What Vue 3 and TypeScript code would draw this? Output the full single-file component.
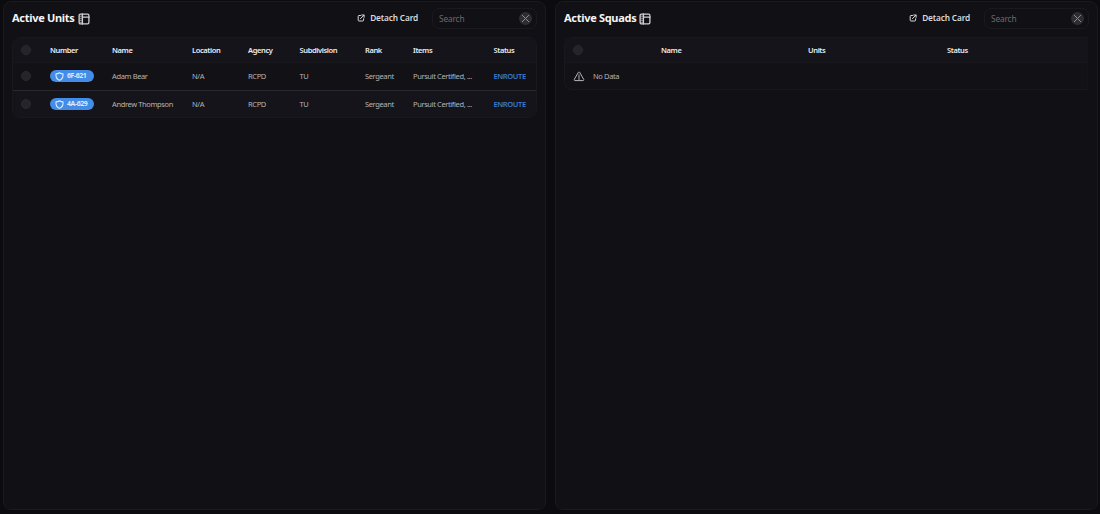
<script setup lang="ts">
interface Unit {
  number: string
  name: string
  location: string
  agency: string
  subdivision: string
  rank: string
  items: string
  status: string
}

const unitColumns: string[] = ['Number', 'Name', 'Location', 'Agency', 'Subdivision', 'Rank', 'Items', 'Status']
const squadColumns: string[] = ['Name', 'Units', 'Status']
const shared = { location: 'N/A', agency: 'RCPD', subdivision: 'TU', rank: 'Sergeant', items: 'Pursuit Certified, ...', status: 'ENROUTE' }
const units: Unit[] = [
  { number: '6F-621', name: 'Adam Bear', ...shared },
  { number: '4A-629', name: 'Andrew Thompson', ...shared },
]
const cards = [
  { id: 'units', title: 'Active Units' },
  { id: 'squads', title: 'Active Squads' },
]
</script>

<template>
  <main class="board">
    <section v-for="card in cards" :key="card.id" class="card" :class="card.id">
      <header class="card-head">
        <h2>{{ card.title }}</h2>
        <svg class="layout-icon" viewBox="0 0 12 12">
          <rect x="1.1" y="1.1" width="9.8" height="9.8" rx="1.3" />
          <path d="M4.4 1v10M4.4 4.2H11" />
          <path class="shade" d="M1.7 3.2h2M1.7 5.3h2M1.7 7.3h2M1.7 9.3h2" />
        </svg>
        <button class="detach">
          <svg class="detach-icon" viewBox="0 0 8 8">
            <path d="M3.5 1.5H2a.8.8 0 0 0-.8.8v3.9c0 .5.3.8.8.8h3.8c.5 0 .8-.3.8-.8V4.7M4.7 1h2.4v2.3M7 1.1 3.5 4.6" />
          </svg>
          <span>Detach Card</span>
        </button>
        <div class="search">
          <span>Search</span>
          <i class="clear">
            <svg viewBox="0 0 13 13"><path d="m3.2 3.2 6.6 6.6m0-6.6L3.2 9.8" /></svg>
          </i>
        </div>
      </header>

      <div v-if="card.id === 'units'" class="table">
        <div class="row head">
          <i class="check"></i>
          <b v-for="column in unitColumns" :key="column">{{ column }}</b>
        </div>
        <div v-for="unit in units" :key="unit.number" class="row">
          <i class="check"></i>
          <span class="badge">
            <svg viewBox="0 0 10 10"><path d="M5 .9C3.9 1.7 2.6 2.1 1.1 2.1.8 5.4 1.9 8.1 5 9.2 8.1 8.1 9.2 5.4 8.9 2.1 7.4 2.1 6.1 1.7 5 .9Z" /></svg>
            <span>{{ unit.number }}</span>
          </span>
          <span>{{ unit.name }}</span>
          <span>{{ unit.location }}</span>
          <span>{{ unit.agency }}</span>
          <span>{{ unit.subdivision }}</span>
          <span>{{ unit.rank }}</span>
          <span>{{ unit.items }}</span>
          <span class="status">{{ unit.status }}</span>
        </div>
      </div>

      <div v-else class="table">
        <div class="row head">
          <i class="check"></i>
          <b v-for="column in squadColumns" :key="column">{{ column }}</b>
        </div>
        <div class="empty">
          <svg viewBox="0 0 12 11"><path d="M5.3 1.4c.3-.6 1.1-.6 1.4 0l4 7c.3.6 0 1.2-.7 1.2H2c-.7 0-1-.6-.7-1.2zM6 3.9v2.8M6 7.5v1" /></svg>
          <span>No Data</span>
        </div>
      </div>
    </section>
  </main>
</template>

<style>
body {
  background: #0c0b10;
}
</style>

<style scoped>
* {
  box-sizing: border-box;
}
.board {
  display: grid;
  grid-template-columns: 543px 543px;
  gap: 9px;
  height: 514px;
  padding: 1px 0 4px 3px;
  overflow: hidden;
  background: #0c0b10;
  color: #b4b4b8;
  font: 7.5px/10px "Noto Sans", sans-serif;
  letter-spacing: -0.38px;
  white-space: nowrap;
}
.card {
  min-width: 0;
  padding: 6px 8px 0;
  border: 1px solid #1b1a1f;
  border-radius: 8px;
  background: #111015;
}
.card-head {
  display: flex;
  align-items: center;
  height: 21px;
  color: #f4f4f6;
}
h2 {
  margin: 0 0 1px;
  font-size: 11px;
  line-height: 16px;
  font-weight: 700;
  letter-spacing: -0.3px;
}
svg {
  display: block;
  flex: none;
  fill: none;
  stroke: currentColor;
  stroke-linecap: round;
  stroke-linejoin: round;
}
.layout-icon {
  width: 12px;
  height: 12px;
  margin: 0 0 0 3px;
  stroke-width: 1.3;
  color: #d0d0d2;
}
.layout-icon .shade {
  stroke-width: 1;
  opacity: 0.7;
}
.detach {
  display: flex;
  align-items: center;
  gap: 5px;
  margin: 0 14px 1px auto;
  padding: 0;
  border: 0;
  background: none;
  color: #d8d8db;
  font: 600 8.3px/12px "Noto Sans", sans-serif;
  letter-spacing: -0.16px;
}
.detach-icon {
  width: 8px;
  height: 8px;
  stroke-width: 1;
}
.search {
  display: flex;
  align-items: center;
  justify-content: space-between;
  width: 105px;
  height: 21px;
  padding: 0 4px 0 6px;
  border: 1px solid #19191e;
  border-radius: 7px;
  color: #6a6a6f;
  font-size: 8.3px;
  letter-spacing: -0.15px;
}
.clear {
  width: 13px;
  height: 13px;
  border-radius: 50%;
  background: #2e2e32;
  color: #8c8c90;
}
.table {
  margin-top: 8px;
  border: 1px solid #19181d;
  border-radius: 8px;
  background: #121116;
  overflow: hidden;
}
.units .table {
  width: 525px;
}
.squads .table {
  width: 524px;
  border-right-color: #151419;
  border-radius: 8px 0 0 8px;
}
.row {
  display: grid;
  align-items: center;
  height: 27px;
  padding-left: 8px;
}
.units .row {
  grid-template-columns: 29px 62px 80px 56px 51.5px 65.5px 48px 80.5px 1fr;
}
.squads .row {
  grid-template-columns: 88px 147px 139px 1fr;
}
.row.head {
  height: 25px;
  background: #15141a;
  color: #ececef;
  border-bottom: 1px solid #19181d;
}
.row:nth-child(2) {
  padding-bottom: 1px;
}
.row:nth-child(3) {
  border-top: 1px solid #29282d;
  background: #15141a;
}
.row b {
  font-weight: 600;
}
.check {
  width: 10px;
  height: 10px;
  border: 1px solid #2b2b2f;
  border-radius: 50%;
  background: #252529;
}
.badge {
  display: flex;
  align-items: center;
  gap: 3px;
  width: 44px;
  height: 12px;
  padding-left: 5px;
  border-radius: 6px;
  background: #438de8;
  color: #d9eaff;
  font-size: 6.9px;
  font-weight: 700;
  letter-spacing: -0.4px;
}
.badge svg {
  width: 9px;
  height: 9px;
  stroke-width: 1.2;
}
.status {
  color: #397bd0;
  font-weight: 600;
}
.empty {
  display: flex;
  align-items: center;
  gap: 8px;
  height: 26px;
  padding-left: 8px;
}
.empty svg {
  width: 12px;
  height: 11px;
  color: #b5b5b9;
}
</style>
